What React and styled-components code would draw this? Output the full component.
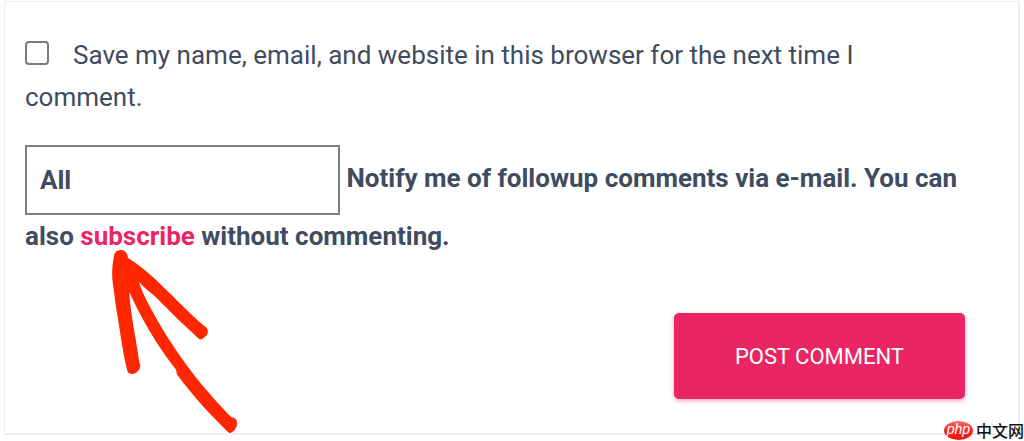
import React from "react";
import styled, { createGlobalStyle } from "styled-components";

const GlobalStyle = createGlobalStyle`
  *,
  *::before,
  *::after {
    box-sizing: border-box;
  }
  body {
    margin: 0;
    background-color: #fff;
    color: #3f4c5f;
    font-family: Roboto, "Liberation Sans", sans-serif;
    font-size: 26px;
    line-height: 42px;
  }
`;

const Page = styled.main`
  position: relative;
  padding: 1px 4px 5px;
`;

const CommentForm = styled.form`
  display: flex;
  flex-direction: column;
  padding: 32px 53px 34px 20px;
  border: 1px solid #eeeeee;
  border-right-width: 2px;
  border-bottom-width: 2px;
`;

const ConsentField = styled.p`
  margin: 0 0 27px;
`;

const Checkbox = styled.input`
  appearance: none;
  width: 24px;
  height: 24px;
  margin: 0 24px 0 0;
  border: 2px solid #7a7a7a;
  border-radius: 4px;
  background-color: #fff;
  vertical-align: -1px;
  &:checked {
    background-color: #e92663;
  }
`;

const NotifyField = styled.p`
  margin: 0 0 56px;
  font-weight: 700;
`;

const Select = styled.select`
  appearance: none;
  width: 315px;
  height: 70px;
  padding: 0 13px;
  border: 2px solid #7f7f7f;
  border-radius: 0;
  background-color: #fff;
  color: inherit;
  font: inherit;
  vertical-align: middle;
`;

const Link = styled.a`
  color: #e92663;
  text-decoration: none;
`;

const SubmitButton = styled.button`
  align-self: flex-end;
  height: 86px;
  padding: 0 61px;
  border: none;
  border-radius: 5px;
  background-color: #e92663;
  box-shadow: 0 2px 5px rgba(233, 38, 99, 0.4);
  color: #fff;
  font-family: inherit;
  font-size: 22px;
  text-transform: uppercase;
  cursor: pointer;
`;

const ArrowMark = styled.svg`
  position: absolute;
  top: 248px;
  left: 110px;
  width: 130px;
  height: 187px;
  pointer-events: none;
`;

const Brand = styled.div`
  position: absolute;
  right: 0;
  bottom: 0;
  display: flex;
  align-items: center;
  gap: 3px;
  height: 20px;
  color: #111;
  font-family: "Noto Sans CJK SC", sans-serif;
  font-size: 16px;
  font-weight: 500;
  line-height: 20px;
`;

const BrandBadge = styled.span`
  display: flex;
  align-items: center;
  justify-content: center;
  width: 29px;
  height: 19px;
  padding-bottom: 2px;
  border-radius: 50%;
  background: linear-gradient(#fb6a62, #ee2a28 55%, #f5100f);
  color: #fff;
  font-family: "Liberation Sans", sans-serif;
  font-size: 14px;
  font-style: italic;
  line-height: 16px;
`;

const Arrow = () => (
  <ArrowMark viewBox="60 54 390 561" aria-hidden="true">
    <path
      fill="#ff2600"
      d="M72 78 C73 65 83 60 95 60 C106 61 112 70 114 84 C142 101 170 124 195 147 C237 186 292 243 325 273 L346 290 C355 296 355 307 351 315 L337 327 C330 331 325 325 320 320 L291 293 C260 265 224 227 193 197 C177 185 161 171 147 156 C154 181 168 210 185 240 C214 295 250 351 288 403 C325 455 378 515 424 562 C437 562 443 573 441 585 C438 597 430 606 420 610 C410 604 405 597 399 591 C352 545 298 484 262 434 C258 429 262 425 256 416 C199 345 151 259 118 186 C119 234 136 317 143 364 C145 381 147 393 151 407 C149 419 142 430 127 432 C115 432 112 427 111 418 C98 363 90 304 82 254 C75 216 73 187 69 164 C64 133 67 104 72 78 Z"
    />
  </ArrowMark>
);

const App = () => {
  return (
    <>
      <GlobalStyle />
      <Page>
        <CommentForm onSubmit={(e) => e.preventDefault()}>
          <ConsentField>
            <Checkbox type="checkbox" id="consent" name="consent" />
            <label htmlFor="consent">
              Save my name, email, and website in this browser for the next time
              I comment.
            </label>
          </ConsentField>
          <NotifyField>
            <Select id="notify" name="notify" defaultValue="all">
              <option value="all">All</option>
              <option value="replies">Replies to my comments</option>
              <option value="none">Don't subscribe</option>
            </Select>{" "}
            <label htmlFor="notify">
              Notify me of followup comments via e-mail.
            </label>{" "}
            You can also <Link href="#subscribe">subscribe</Link> without
            commenting.
          </NotifyField>
          <SubmitButton type="submit">Post Comment</SubmitButton>
        </CommentForm>
        <Arrow />
        <Brand>
          <BrandBadge>php</BrandBadge>
          中文网
        </Brand>
      </Page>
    </>
  );
};

export default App;
